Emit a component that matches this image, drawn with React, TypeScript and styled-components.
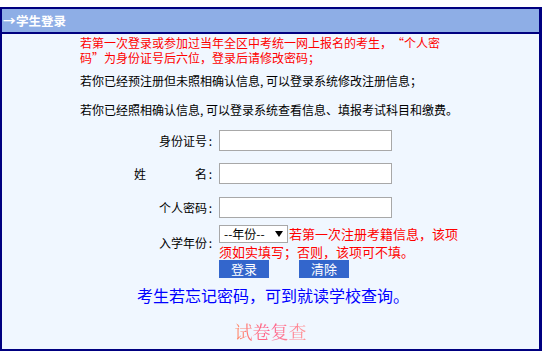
import React from "react";
import styled, { createGlobalStyle } from "styled-components";

const GlobalStyle = createGlobalStyle`
  html, body {
    margin: 0;
    padding: 0;
    background: #ffffff;
  }
  body {
    font-family: "Noto Sans CJK SC", "Liberation Sans", sans-serif;
    font-size: 12px;
    color: #000;
  }
`;

const Page = styled.div`
  padding-top: 7px;
`;

const Panel = styled.div`
  width: 542px;
  height: 344px;
  box-sizing: border-box;
  border: 2px solid #000080;
  border-right-width: 3px;
  background: #f0f7ff;
  display: flex;
  flex-direction: column;
  overflow: hidden;
`;

const Header = styled.div`
  height: 23px;
  flex: none;
  background: #8eaee6;
  border-bottom: 2px solid #000080;
  display: flex;
  align-items: center;
  padding-left: 1px;
  color: #ffffff;
  font-weight: bold;
  font-size: 12.5px;
  line-height: 14px;
`;

const Arrow = styled.span`
  display: inline-block;
  width: 13px;
  font-weight: bold;
`;

const Body = styled.div`
  flex: 1;
  display: flex;
  flex-direction: column;
`;

const Text = styled.p<{ $color?: string; $top: number }>`
  margin: ${(p) => p.$top}px 0 0 78px;
  width: 390px;
  font-size: 12px;
  line-height: 15px;
  color: ${(p) => p.$color || "#000"};
`;

const Quote = styled.span`
  display: inline-block;
  width: 12px;
  text-align: right;
`;

const Form = styled.div`
  margin-top: 13px;
  display: flex;
  flex-direction: column;
`;

const Row = styled.div<{ $top?: number }>`
  display: grid;
  grid-template-columns: 217px 240px;
  align-items: center;
  margin-top: ${(p) => p.$top || 0}px;
`;

const Label = styled.div<{ $spread?: boolean }>`
  display: flex;
  justify-content: ${(p) => (p.$spread ? "space-between" : "flex-end")};
  padding-left: ${(p) => (p.$spread ? "132px" : "0")};
  padding-right: 5px;
  font-size: 12px;
  line-height: 14px;
`;

const Colon = styled.span`
  display: inline-block;
  width: 7px;
  text-align: center;
`;

const Input = styled.input`
  box-sizing: border-box;
  width: 173px;
  height: 21px;
  margin: 0;
  border: 1px solid #a8a8a8;
  background: #ffffff;
  padding: 0 2px;
  font-size: 12px;
  outline: none;
`;

const Field = styled.div`
  font-size: 13px;
  line-height: 17px;
  color: #ff0000;
`;

const SelectBox = styled.span`
  display: inline-flex;
  box-sizing: border-box;
  width: 69px;
  height: 18px;
  align-items: center;
  justify-content: space-between;
  vertical-align: top;
  margin-right: 1px;
  padding: 0 4px 0 4px;
  border: 1px solid #a8a8a8;
  background: #ffffff;
  color: #000;
  font-size: 12px;
  line-height: 16px;
`;

const Buttons = styled.div`
  margin-left: 217px;
  display: flex;
  gap: 30px;
`;

const Button = styled.button`
  width: 50px;
  height: 18px;
  margin: 0;
  padding: 0;
  border: none;
  background: #3366cc;
  color: #ffffff;
  font-family: "Noto Sans CJK SC", sans-serif;
  font-size: 13px;
  line-height: 18px;
  cursor: pointer;
`;

const Forgot = styled.div`
  margin: 7px 0 0 135px;
  font-size: 16px;
  line-height: 20px;
  color: #0000ff;
`;

const Review = styled.div`
  margin-top: 15px;
  text-align: center;
  font-size: 18px;
  line-height: 22px;
  font-family: "Noto Serif CJK SC", "Noto Sans CJK SC", serif;
`;

const ReviewText = styled.span`
  background: linear-gradient(90deg, #ff8a66, #ff5c8a 45%, #ff9a9a);
  -webkit-background-clip: text;
  background-clip: text;
  color: transparent;
`;

export default function App() {
  return (
    <Page>
      <GlobalStyle />
      <Panel>
        <Header>
          <Arrow>→</Arrow>学生登录
        </Header>
        <Body>
          <Text $color="#ff0000" $top={1}>
            若第一次登录或参加过当年全区中考统一网上报名的考生，<Quote>“</Quote>个人密
            <br />
            码”为身份证号后六位，登录后请修改密码；
          </Text>
          <Text $top={8}>若你已经预注册但未照相确认信息, 可以登录系统修改注册信息；</Text>
          <Text $top={14}>若你已经照相确认信息, 可以登录系统查看信息、填报考试科目和缴费。</Text>
          <Form>
            <Row>
              <Label>
                <span>
                  身份证号<Colon>:</Colon>
                </span>
              </Label>
              <Input type="text" />
            </Row>
            <Row $top={12}>
              <Label $spread>
                <span>姓</span>
                <span>
                  名<Colon>:</Colon>
                </span>
              </Label>
              <Input type="text" />
            </Row>
            <Row $top={13}>
              <Label>
                <span>
                  个人密码<Colon>:</Colon>
                </span>
              </Label>
              <Input type="password" />
            </Row>
            <Row $top={7}>
              <Label>
                <span>
                  入学年份<Colon>:</Colon>
                </span>
              </Label>
              <Field>
                <SelectBox>
                  <span>--年份--</span>
                  <svg width="8" height="6" viewBox="0 0 8 6">
                    <path d="M0 0H8L4 6Z" fill="#000" />
                  </svg>
                </SelectBox>
                若第一次注册考籍信息，该项须如实填写；否则，该项可不填。
              </Field>
            </Row>
          </Form>
          <Buttons>
            <Button>登录</Button>
            <Button>清除</Button>
          </Buttons>
          <Forgot>考生若忘记密码，可到就读学校查询。</Forgot>
          <Review>
            <ReviewText>试卷复查</ReviewText>
          </Review>
        </Body>
      </Panel>
    </Page>
  );
}
